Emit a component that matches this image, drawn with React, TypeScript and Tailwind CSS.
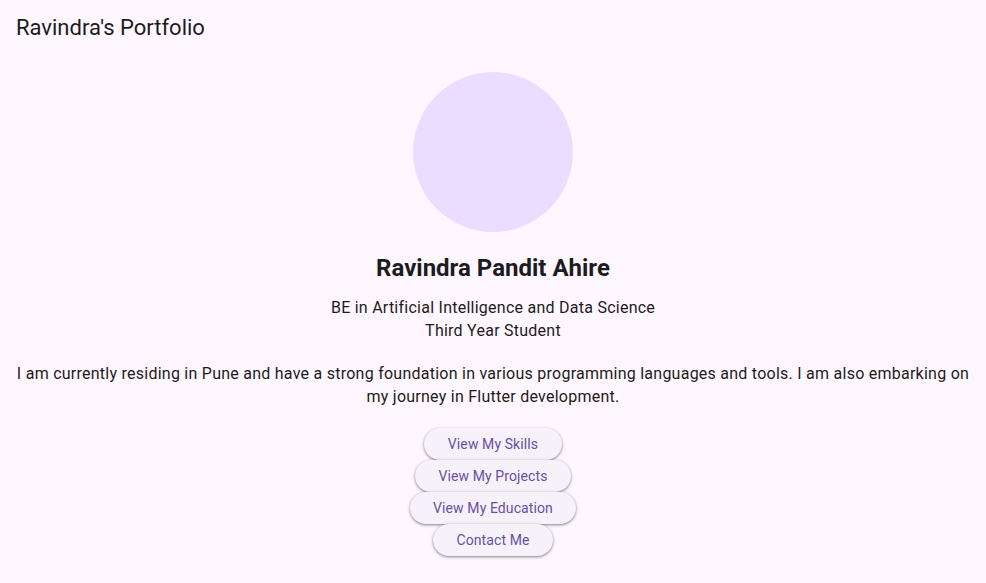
import React from "react";

const buttons = ["View My Skills", "View My Projects", "View My Education", "Contact Me"];

export default function App() {
  return (
    <div
      className="min-h-[583px] w-full bg-[#fef7ff] text-[#1d1b20]"
      style={{ fontFamily: "Roboto, 'Noto Sans', sans-serif" }}
    >
      <header className="flex h-[56px] items-center px-4">
        <h1 className="text-[22px] leading-[28px] font-normal text-[#1d1b20]">Ravindra's Portfolio</h1>
      </header>
      <main className="flex flex-col items-center p-4">
        <div className="h-[160px] w-[160px] rounded-full bg-[#eaddff]" />
        <h2 className="mt-[20px] text-[24px] leading-[32px] font-bold">Ravindra Pandit Ahire</h2>
        <div className="mt-[12px] text-center text-[16px] leading-[23px] tracking-[0.25px]">
          <p>BE in Artificial Intelligence and Data Science</p>
          <p>Third Year Student</p>
        </div>
        <p className="mt-[20px] text-center text-[16px] leading-[23px] tracking-[0.25px]">
          I am currently residing in Pune and have a strong foundation in various programming languages and tools. I am also embarking on my journey in Flutter development.
        </p>
        <div className="mt-[20px] flex flex-col items-center">
          {buttons.map((b) => (
            <button
              key={b}
              className="flex h-[32px] items-center rounded-full bg-[#f7f2fa] px-[23.5px] text-[14px] font-normal tracking-[0.1px] text-[#6750a4] shadow-[0_1px_2px_rgba(0,0,0,0.3),0_1px_3px_1px_rgba(0,0,0,0.15)]"
            >
              {b}
            </button>
          ))}
        </div>
      </main>
    </div>
  );
}
